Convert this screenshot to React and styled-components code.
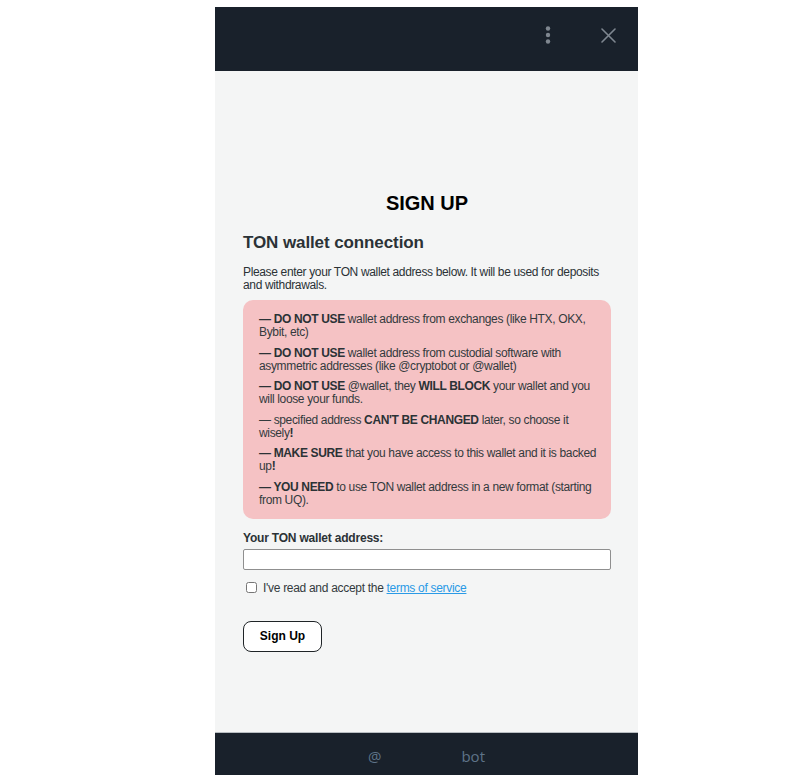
import React from "react";
import styled, { createGlobalStyle } from "styled-components";

const GlobalStyle = createGlobalStyle`
  html, body {
    margin: 0;
    padding: 0;
    background: #ffffff;
  }
  body {
    font-family: "Liberation Sans", Arial, sans-serif;
  }
`;

const Page = styled.div`
  padding: 7px 0 0 215px;
`;

const Panel = styled.div`
  width: 423px;
  display: flex;
  flex-direction: column;
`;

const Header = styled.header`
  height: 64px;
  box-sizing: border-box;
  padding: 0 22px 8px 0;
  background: #19212b;
  display: flex;
  align-items: center;
  justify-content: flex-end;
  gap: 44px;
`;

const IconButton = styled.button`
  background: none;
  border: none;
  padding: 0;
  display: flex;
  align-items: center;
  justify-content: center;
  width: 16px;
  height: 20px;
  cursor: pointer;
`;

const Body = styled.main`
  height: 661px;
  box-sizing: border-box;
  background: #f4f5f5;
  padding: 121px 27px 0 28px;
  color: #2b3236;
`;

const Title = styled.h1`
  margin: 0;
  text-align: center;
  font-size: 20px;
  line-height: 23px;
  font-weight: 700;
  color: #000;
`;

const Subtitle = styled.h2`
  margin: 18px 0 0;
  font-size: 17px;
  line-height: 20px;
  font-weight: 700;
  letter-spacing: -0.1px;
  color: #2b3236;
`;

const Intro = styled.p`
  margin: 13px 0 0;
  font-size: 12px;
  line-height: 13px;
  letter-spacing: -0.35px;
  color: #2b3236;
`;

const Warning = styled.div`
  margin-top: 8px;
  background: #f5c2c4;
  border-radius: 10px;
  padding: 13px 12px 12px 16px;
  display: flex;
  flex-direction: column;
  gap: 7.6px;
`;

const WarnItem = styled.p`
  margin: 0;
  font-size: 12px;
  line-height: 13px;
  letter-spacing: -0.35px;
  color: #333a3d;
  b {
    color: #2b3236;
  }
`;

const Label = styled.label`
  display: block;
  margin-top: 12px;
  font-size: 12px;
  line-height: 14px;
  font-weight: 700;
  letter-spacing: -0.2px;
  color: #2b3236;
`;

const Input = styled.input`
  display: block;
  margin-top: 4px;
  width: 100%;
  height: 21px;
  box-sizing: border-box;
  border: 1px solid #8f8f8f;
  border-radius: 2px;
  background: #fff;
  outline: none;
`;

const CheckRow = styled.div`
  margin-top: 11px;
  display: flex;
  align-items: center;
  gap: 6px;
  font-size: 12px;
  line-height: 14px;
  letter-spacing: -0.3px;
  color: #333a3d;
  input {
    margin: 0 0 0 3px;
    width: 11px;
    height: 11px;
  }
  a {
    color: #2a9ae6;
    text-decoration: underline;
  }
`;

const SubmitButton = styled.button`
  margin-top: 26px;
  width: 79px;
  height: 31px;
  background: #fff;
  border: 1px solid #1f2427;
  border-radius: 8px;
  font-family: "Liberation Sans", Arial, sans-serif;
  font-size: 12px;
  font-weight: 700;
  color: #000;
  cursor: pointer;
`;

const Footer = styled.footer`
  height: 43px;
  box-sizing: border-box;
  padding-top: 3px;
  background: #19212b;
  border-top: 1px solid #b9bec2;
  display: flex;
  align-items: center;
  justify-content: center;
  font-family: "Open Sans", "Noto Sans", sans-serif;
  font-size: 15px;
  color: #5e7388;
`;

const Hidden = styled.span`
  display: inline-block;
  width: 80px;
`;

function DotsIcon() {
  return (
    <svg width="6" height="18" viewBox="0 0 6 18">
      <circle cx="3" cy="2.5" r="2.2" fill="#7f8790" />
      <circle cx="3" cy="9" r="2.2" fill="#7f8790" />
      <circle cx="3" cy="15.5" r="2.2" fill="#7f8790" />
    </svg>
  );
}

function CloseIcon() {
  return (
    <svg width="15" height="15" viewBox="0 0 15 15">
      <path
        d="M1 1 L14 14 M14 1 L1 14"
        stroke="#7f8790"
        strokeWidth="1.6"
        strokeLinecap="round"
      />
    </svg>
  );
}

const warnings = [
  [<b key="b">— DO NOT USE</b>, " wallet address from exchanges (like HTX, OKX, Bybit, etc)"],
  [<b key="b">— DO NOT USE</b>, " wallet address from custodial software with asymmetric addresses (like @cryptobot or @wallet)"],
  [<b key="b">— DO NOT USE</b>, " @wallet, they ", <b key="c">WILL BLOCK</b>, " your wallet and you will loose your funds."],
  ["— specified address ", <b key="b">CAN'T BE CHANGED</b>, " later, so choose it wisely", <b key="c">!</b>],
  [<b key="b">— MAKE SURE</b>, " that you have access to this wallet and it is backed up", <b key="c">!</b>],
  [<b key="b">— YOU NEED</b>, " to use TON wallet address in a new format (starting from UQ)."],
];

export default function App() {
  return (
    <>
      <GlobalStyle />
      <Page>
        <Panel>
          <Header>
            <IconButton aria-label="menu">
              <DotsIcon />
            </IconButton>
            <IconButton aria-label="close">
              <CloseIcon />
            </IconButton>
          </Header>
          <Body>
            <Title>SIGN UP</Title>
            <Subtitle>TON wallet connection</Subtitle>
            <Intro>
              Please enter your TON wallet address below. It will be used for deposits and withdrawals.
            </Intro>
            <Warning>
              {warnings.map((w, i) => (
                <WarnItem key={i}>{w}</WarnItem>
              ))}
            </Warning>
            <Label htmlFor="wallet">Your TON wallet address:</Label>
            <Input id="wallet" type="text" />
            <CheckRow>
              <input type="checkbox" id="tos" />
              <label htmlFor="tos">
                I've read and accept the <a href="#">terms of service</a>
              </label>
            </CheckRow>
            <SubmitButton>Sign Up</SubmitButton>
          </Body>
          <Footer>
            @<Hidden />bot
          </Footer>
        </Panel>
      </Page>
    </>
  );
}
